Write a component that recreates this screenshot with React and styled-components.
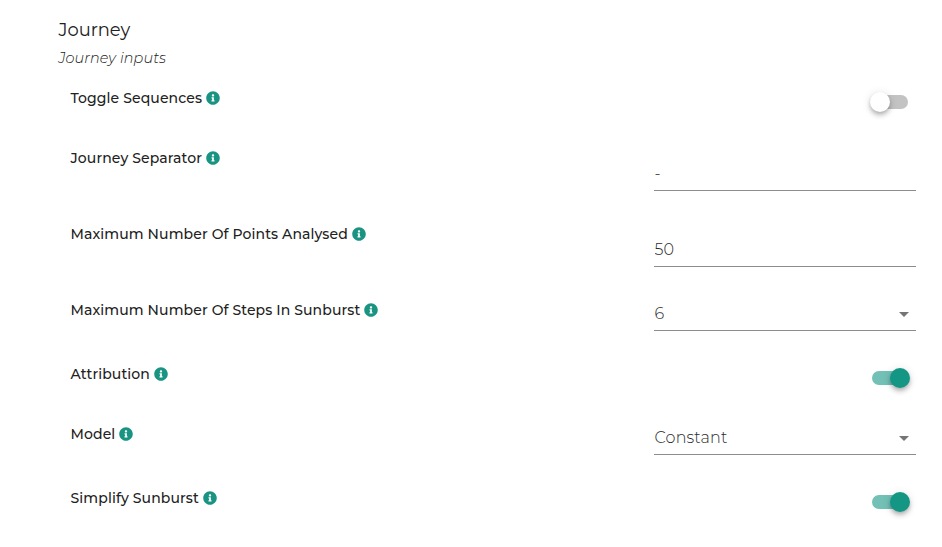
import React from "react";
import styled, { createGlobalStyle } from "styled-components";
import { FaInfoCircle } from "react-icons/fa";

const GlobalStyle = createGlobalStyle`
  *, *::before, *::after { box-sizing: border-box; }
  body { margin: 0; background: #fff; color: #212121; font-family: Montserrat, Inter, sans-serif; }
`;

const Panel = styled.main`
  height: 547px;
  padding: 18px 26px 0 58px;
  overflow: hidden;
`;

const Title = styled.h1`
  margin: 0;
  padding-left: 0.5px;
  font-size: 17.9px;
  font-weight: 400;
  line-height: 24px;
`;

const Subtitle = styled.p`
  margin: 5px 0 0;
  padding-left: 0.5px;
  font-size: 14.4px;
  font-style: italic;
  font-weight: 300;
  line-height: 22px;
  letter-spacing: 0.12px;
`;

const Settings = styled.div`
  display: flex;
  flex-direction: column;
  padding: 11px 0 0 12px;
`;

const rowHeights = { toggle: 60, input: 76, select: 64 };

const Row = styled.div`
  display: flex;
  justify-content: space-between;
  align-items: flex-start;
  height: ${(p) => rowHeights[p.$kind]}px;
`;

const Label = styled.div`
  display: flex;
  align-items: center;
  gap: 4px;
  height: 36px;
  padding-left: 0.5px;
`;

const LabelText = styled.span`
  font-size: 14px;
  font-weight: 500;
  line-height: 20px;
  letter-spacing: 0.11px;
  white-space: nowrap;
`;

const InfoIcon = styled(FaInfoCircle)`
  width: 14px;
  height: 14px;
  margin-top: -1px;
  color: #1a9482;
`;

const Control = styled.div`
  display: flex;
  justify-content: flex-end;
  width: 262px;
`;

const TextInput = styled.input`
  width: 100%;
  height: 33px;
  margin: 18px 0 0;
  padding: 0 0 2px 0.5px;
  border: 0;
  border-bottom: 1px solid #8c8c8c;
  border-radius: 0;
  outline: 0;
  background: transparent;
  color: #2c2c2c;
  font: 300 16px/30px Montserrat, Inter, sans-serif;
  letter-spacing: 0.1px;
`;

const Select = styled.div`
  display: flex;
  align-items: center;
  justify-content: space-between;
  width: 100%;
  height: 33px;
  margin-top: 6px;
  padding: 0 7px 0 0.5px;
  border-bottom: 1px solid #8c8c8c;
  color: #2c2c2c;
  font-size: 16px;
  font-weight: 300;
  letter-spacing: 0.15px;
`;

const SelectValue = styled.span`
  padding-bottom: 2px;
`;

const Caret = styled.svg`
  width: 10px;
  height: 5px;
  fill: #757575;
`;

const Switch = styled.button`
  display: flex;
  align-items: center;
  justify-content: ${(p) => (p.$on ? "flex-end" : "flex-start")};
  width: 36px;
  height: 14px;
  margin: 15px 8px 0 0;
  padding: 0;
  border: 0;
  border-radius: 7px;
  background: ${(p) => (p.$on ? "#73c0b7" : "#c3c3c3")};
`;

const Thumb = styled.span`
  flex: none;
  width: 20px;
  height: 20px;
  margin: 0 -2px;
  border-radius: 50%;
  background: ${(p) => (p.$on ? "#149685" : "#fff")};
  box-shadow: 0 2px 4px -1px rgba(0, 0, 0, 0.2), 0 4px 5px rgba(0, 0, 0, 0.14),
    0 1px 10px rgba(0, 0, 0, 0.12);
`;

const settings = [
  { label: "Toggle Sequences", kind: "toggle", value: false },
  { label: "Journey Separator", kind: "input", value: "-" },
  { label: "Maximum Number Of Points Analysed", kind: "input", value: "50" },
  { label: "Maximum Number Of Steps In Sunburst", kind: "select", value: "6" },
  { label: "Attribution", kind: "toggle", value: true },
  { label: "Model", kind: "select", value: "Constant" },
  { label: "Simplify Sunburst", kind: "toggle", value: true },
];

function Field({ label, kind, value }) {
  if (kind === "toggle") {
    return (
      <Switch $on={value} role="switch" aria-checked={value} aria-label={label}>
        <Thumb $on={value} />
      </Switch>
    );
  }
  if (kind === "input") return <TextInput aria-label={label} defaultValue={value} />;
  return (
    <Select>
      <SelectValue>{value}</SelectValue>
      <Caret viewBox="0 0 10 5" aria-hidden="true">
        <path d="M0 0h10L5 5z" />
      </Caret>
    </Select>
  );
}

export default function App() {
  return (
    <>
      <GlobalStyle />
      <Panel>
        <Title>Journey</Title>
        <Subtitle>Journey inputs</Subtitle>
        <Settings>
          {settings.map((s) => (
            <Row key={s.label} $kind={s.kind}>
              <Label>
                <LabelText>{s.label}</LabelText>
                <InfoIcon />
              </Label>
              <Control>
                <Field {...s} />
              </Control>
            </Row>
          ))}
        </Settings>
      </Panel>
    </>
  );
}
